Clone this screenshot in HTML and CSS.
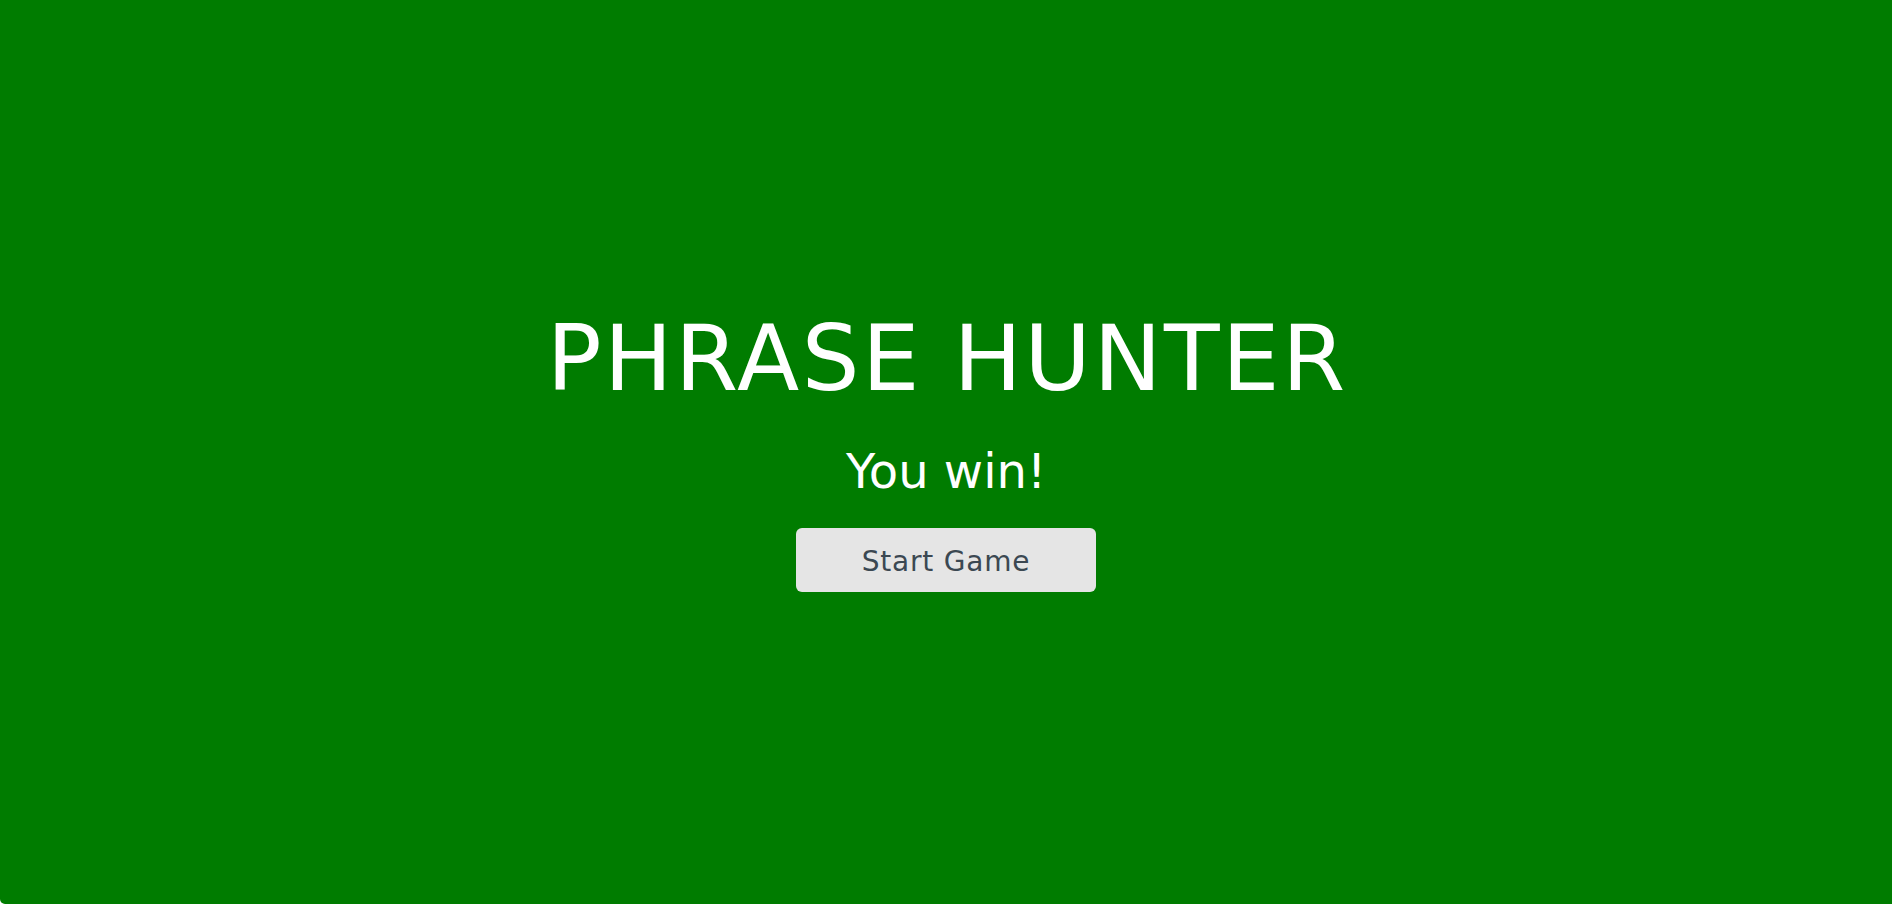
FILE: index.html
```html
<!DOCTYPE html>
<html>
<head>
<meta charset="utf-8">
<link rel="stylesheet" href="styles.css">
</head>
<body>
<div class="overlay">
  <h2 class="title">PHRASE HUNTER</h2>
  <h1 class="message">You win!</h1>
  <button class="btn-reset">Start Game</button>
</div>
</body>
</html>
```
FILE: styles.css
```css
html, body {
  margin: 0;
  padding: 0;
  background: #ffffff;
  height: 100%;
}
.overlay {
  box-sizing: border-box;
  height: 904px;
  width: 100%;
  background: #007c00;
  border-bottom-left-radius: 5px;
  display: flex;
  flex-direction: column;
  align-items: center;
  justify-content: flex-start;
  padding-top: 310px;
  font-family: "DejaVu Sans", sans-serif;
}
.title {
  margin: 0;
  color: #ffffff;
  font-weight: 400;
  font-size: 91px;
  line-height: 98px;
  letter-spacing: 2.5px;
  padding-left: 2.5px;
}
.message {
  margin: 35px 0 0 0;
  color: #ffffff;
  font-weight: 400;
  font-size: 48px;
  line-height: 56px;
}
.btn-reset {
  margin-top: 29px;
  width: 300px;
  height: 64px;
  border: none;
  border-radius: 6px;
  background: #e5e5e5;
  color: #3b4852;
  font-family: "DejaVu Sans", sans-serif;
  font-size: 28px;
  letter-spacing: 0.8px;
  padding: 2px 0 0 0;
}
```
